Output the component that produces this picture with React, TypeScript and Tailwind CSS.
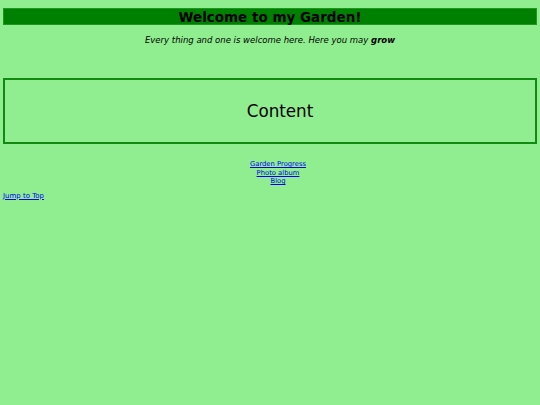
import React from 'react';

const links = ['Garden Progress', 'Photo album', 'Blog'];

const App = () => {
  return (
    <div
      className="min-h-[405px] bg-[#90ee90] px-[3px] pt-[8px] text-black"
      style={{ fontFamily: '"DejaVu Sans", Verdana, sans-serif' }}
    >
      {/* Header */}
      <h1 className="h-[17px] border border-[#1f961f] bg-[#008000] pt-[1px] text-center text-[13.5px] font-bold leading-[15px]">
        Welcome to my Garden!
      </h1>
      <p className="mt-[9px] text-center text-[8.5px] italic leading-[12px]">
        Every thing and one is welcome here. Here you may <b>grow</b>
      </p>

      {/* Main content */}
      <div className="mt-[32px] flex h-[66px] items-center justify-center border-2 border-[#128a12] pl-[20px] pt-[2px] text-[16.75px]">
        Content
      </div>

      {/* Nav */}
      <ul className="mt-[16px] flex flex-col items-center pl-[16px] text-[6.8px] leading-[8.5px]">
        {links.map((l) => (
          <li key={l}>
            <a href="#" className="text-[#0000ee] underline">
              {l}
            </a>
          </li>
        ))}
      </ul>
      <a href="#" className="mt-[6px] block text-[7px] leading-[9px] text-[#0000ee] underline">
        Jump to Top
      </a>
    </div>
  );
};

export default App;
